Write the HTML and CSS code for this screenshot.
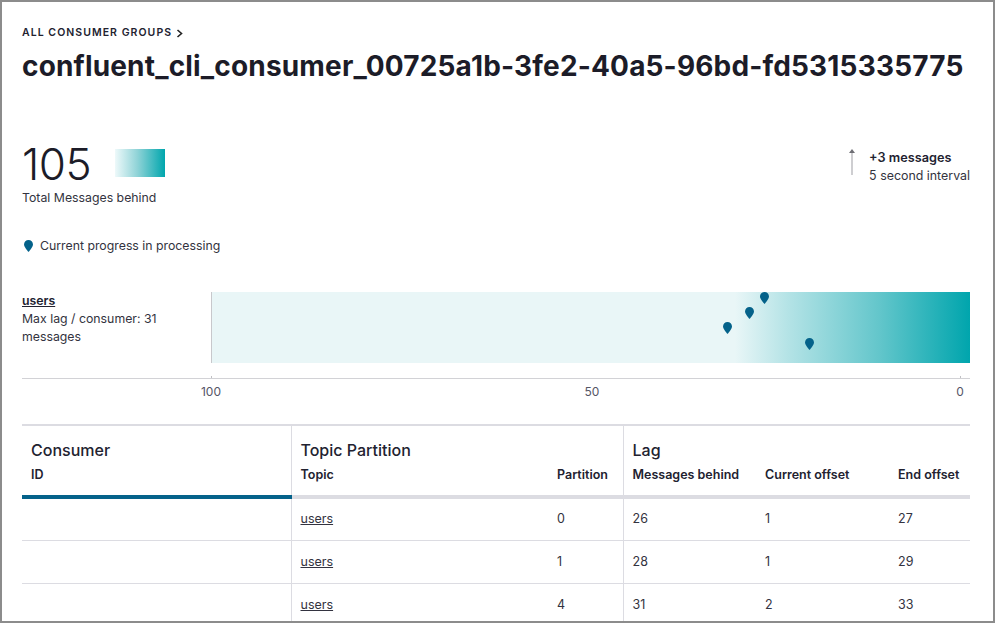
FILE: index.html
```html
<!DOCTYPE html>
<html>
<head>
<meta charset="utf-8">
<link rel="stylesheet" href="styles.css">
</head>
<body>
<div class="page">
  <div class="crumb">ALL CONSUMER GROUPS <svg class="chev" width="7" height="9" viewBox="0 0 7 9"><polyline points="1.5,1 5.5,4.5 1.5,8" fill="none" stroke="#222" stroke-width="1.6"/></svg></div>
  <h1 class="title">confluent_cli_consumer_00725a1b-3fe2-40a5-96bd-fd5315335775</h1>

  <div class="stats">
    <div class="total">
      <div class="total-top">
        <span class="big">105</span>
        <span class="swatch"></span>
      </div>
      <div class="total-label">Total Messages behind</div>
    </div>
    <div class="rate">
      <svg class="up" width="8" height="27" viewBox="0 0 8 27"><line x1="4" y1="3" x2="4" y2="26" stroke="#b4b4b8" stroke-width="1.3"/><polygon points="4,0 7,4 1,4" fill="#6e6e74"/></svg>
      <div class="rate-text">
        <div class="rate-main">+3 messages</div>
        <div class="rate-sub">5 second interval</div>
      </div>
    </div>
  </div>

  <div class="legend">
    <svg class="pin-ic" width="9" height="12" viewBox="0 0 9 12"><path d="M4.5 0C2 0 0 2 0 4.6 0 7.4 4.5 12 4.5 12S9 7.4 9 4.6C9 2 7 0 4.5 0Z" fill="#04628a"/></svg>
    <span>Current progress in processing</span>
  </div>

  <div class="chart">
    <div class="chart-label">
      <a class="topic-link">users</a>
      <div class="chart-desc">Max lag / consumer: 31 messages</div>
    </div>
    <div class="bar">
      <svg class="pin" style="left:511px;top:30px" width="9" height="12" viewBox="0 0 9 12"><path d="M4.5 0C2 0 0 2 0 4.6 0 7.4 4.5 12 4.5 12S9 7.4 9 4.6C9 2 7 0 4.5 0Z" fill="#04628a"/></svg>
      <svg class="pin" style="left:533px;top:15px" width="9" height="12" viewBox="0 0 9 12"><path d="M4.5 0C2 0 0 2 0 4.6 0 7.4 4.5 12 4.5 12S9 7.4 9 4.6C9 2 7 0 4.5 0Z" fill="#04628a"/></svg>
      <svg class="pin" style="left:548px;top:0px" width="9" height="12" viewBox="0 0 9 12"><path d="M4.5 0C2 0 0 2 0 4.6 0 7.4 4.5 12 4.5 12S9 7.4 9 4.6C9 2 7 0 4.5 0Z" fill="#04628a"/></svg>
      <svg class="pin" style="left:593px;top:46px" width="9" height="12" viewBox="0 0 9 12"><path d="M4.5 0C2 0 0 2 0 4.6 0 7.4 4.5 12 4.5 12S9 7.4 9 4.6C9 2 7 0 4.5 0Z" fill="#04628a"/></svg>
    </div>
  </div>
  <div class="axis">
    <span class="tick t100"></span><span class="tick t0"></span>
  </div>
  <div class="axis-labels">
    <span class="al l100">100</span>
    <span class="al l50">50</span>
    <span class="al l0">0</span>
  </div>

  <table class="grid">
    <colgroup>
      <col class="c-id"><col class="c-topic"><col class="c-part"><col class="c-msg"><col class="c-cur"><col class="c-end">
    </colgroup>
    <thead>
      <tr class="group-row">
        <th>Consumer</th>
        <th colspan="2" class="sep">Topic Partition</th>
        <th colspan="3" class="sep">Lag</th>
      </tr>
      <tr class="sub-row">
        <th class="active">ID</th>
        <th class="sep">Topic</th>
        <th>Partition</th>
        <th class="sep">Messages behind</th>
        <th>Current offset</th>
        <th>End offset</th>
      </tr>
    </thead>
    <tbody>
      <tr><td></td><td class="sep"><a class="topic-cell">users</a></td><td>0</td><td class="sep">26</td><td>1</td><td>27</td></tr>
      <tr><td></td><td class="sep"><a class="topic-cell">users</a></td><td>1</td><td class="sep">28</td><td>1</td><td>29</td></tr>
      <tr><td></td><td class="sep"><a class="topic-cell">users</a></td><td>4</td><td class="sep">31</td><td>2</td><td>33</td></tr>
    </tbody>
  </table>
</div>
</body>
</html>
```

FILE: styles.css
```css
* { box-sizing: border-box; }
html, body { margin: 0; padding: 0; }
body {
  width: 995px;
  height: 623px;
  border: 2px solid #8c8c8c;
  overflow: hidden;
  background: #fff;
  font-family: Inter, "Noto Sans", sans-serif;
  color: #222230;
}
.page { padding: 23px 23px 0 20px; }

.crumb {
  font-size: 10.5px;
  line-height: 16px;
  font-weight: 600;
  letter-spacing: 1.05px;
  color: #222230;
  display: flex;
  align-items: center;
  gap: 3px;
}
.chev { margin-left: 1px; }

.title {
  margin: 8px 0 0;
  font-size: 28px;
  line-height: 34px;
  font-weight: 700;
  letter-spacing: 0.17px;
  color: #1c1c28;
}

.stats {
  margin-top: 59px;
  display: flex;
  justify-content: space-between;
  align-items: flex-start;
}
.total-top { display: flex; align-items: flex-start; gap: 24px; }
.big {
  font-size: 44px;
  line-height: 44px;
  font-weight: 300;
  color: #1c1c28;
  letter-spacing: -0.5px;
}
.swatch {
  width: 50px;
  height: 28px;
  margin-top: 7px;
  background: linear-gradient(to right, #eef9fa, #8fd3d7 45%, #00a6ad);
}
.total-label {
  margin-top: 3px;
  font-size: 12.3px;
  line-height: 18px;
  color: #333340;
}
.rate { display: flex; align-items: flex-start; gap: 13px; margin-top: 7px; }
.rate-main { font-size: 12.7px; line-height: 18px; font-weight: 600; color: #222230; }
.rate-sub { font-size: 12.4px; line-height: 18px; color: #333340; }

.legend {
  margin-top: 30px;
  display: flex;
  align-items: center;
  gap: 7px;
  font-size: 12.3px;
  line-height: 18px;
  color: #333340;
  padding-left: 2px;
}

.chart {
  margin-top: 37px;
  display: flex;
  align-items: stretch;
}
.chart-label {
  width: 189px;
  font-size: 12.3px;
  line-height: 18px;
  color: #333340;
}
.topic-link {
  font-weight: 600;
  color: #222230;
  text-decoration: underline;
  display: block;
}
.chart-desc { width: 160px; }
.bar {
  position: relative;
  flex: 1;
  height: 71px;
  border-left: 1px solid #c8c8cc;
  background: linear-gradient(to right, #e9f6f7 0%, #e9f6f7 69%, #b4e3e6 76%, #63c6cb 88%, #00a5ad 100%);
}
.pin { position: absolute; }

.axis {
  position: relative;
  margin-top: 15px;
  height: 1px;
  background: #d2d2d6;
}
.tick { position: absolute; top: -2px; width: 1px; height: 2px; background: #c0c0c4; }
.t100 { left: 189px; }
.t0 { left: 938px; }
.axis-labels {
  position: relative;
  height: 26px;
  font-size: 12px;
  line-height: 16px;
  color: #555566;
}
.al { position: absolute; top: 5px; transform: translateX(-50%); }
.l100 { left: 189px; }
.l50 { left: 570px; }
.l0 { left: 938px; }

.grid {
  margin-top: 19px;
  width: 948px;
  table-layout: fixed;
  border-collapse: collapse;
  border-top: 2px solid #dcdce2;
  font-size: 12.5px;
  color: #333340;
}
.c-id { width: 269px; }
.c-topic { width: 257px; }
.c-part { width: 75px; }
.c-msg { width: 133px; }
.c-cur { width: 133px; }
.c-end { width: 81px; }
.grid th { text-align: left; padding: 0 9px; color: #222230; }
.grid .sep { border-left: 1px solid #dcdce2; }
.group-row th {
  font-size: 16px;
  font-weight: 500;
  line-height: 20px;
  padding-top: 14px;
  padding-bottom: 6px;
}
.sub-row th {
  font-size: 12.5px;
  font-weight: 600;
  line-height: 18px;
  padding-bottom: 11px;
  border-bottom: 4px solid #dcdce2;
}
.sub-row th.active { border-bottom-color: #04628a; }
.grid td {
  height: 43px;
  padding: 0 9px;
  border-bottom: 1px solid #dcdce2;
  line-height: 18px;
  vertical-align: middle;
}
.topic-cell { color: #333340; text-decoration: underline; }
```
